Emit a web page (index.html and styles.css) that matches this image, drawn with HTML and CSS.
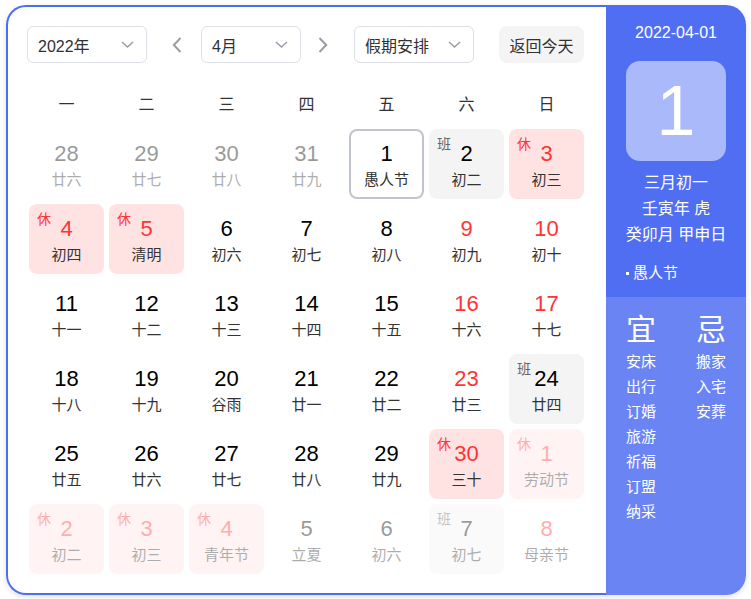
FILE: index.html
```html
<html>
<head>
    <meta name="viewport" content="width=device-width, initial-scale=1.0">
    <title>万年历</title>
    <link rel="stylesheet" href="styles.css">
</head>
<body>
<div class="calendar">
    <div class="main">
        <div class="toolbar">
            <div class="select select-year">
                <span>2022年</span>
                <svg class="chevron" width="13" height="7" viewBox="0 0 13 7"><path d="M1 1 L6.5 6 L12 1" /></svg>
            </div>
            <button class="arrow arrow-prev">
                <svg width="10" height="16" viewBox="0 0 10 16"><path d="M8.5 1 L1.8 8 L8.5 15" /></svg>
            </button>
            <div class="select select-month">
                <span>4月</span>
                <svg class="chevron" width="13" height="7" viewBox="0 0 13 7"><path d="M1 1 L6.5 6 L12 1" /></svg>
            </div>
            <button class="arrow arrow-next">
                <svg width="10" height="16" viewBox="0 0 10 16"><path d="M1.5 1 L8.2 8 L1.5 15" /></svg>
            </button>
            <div class="select select-holiday">
                <span>假期安排</span>
                <svg class="chevron" width="13" height="7" viewBox="0 0 13 7"><path d="M1 1 L6.5 6 L12 1" /></svg>
            </div>
            <button class="today-btn">返回今天</button>
        </div>
        <div class="weekdays">
            <span>一</span><span>二</span><span>三</span><span>四</span><span>五</span><span>六</span><span>日</span>
        </div>
        <div class="days" id="days"></div>
    </div>
    <div class="side">
        <div class="side-top">
            <div class="side-date">2022-04-01</div>
            <div class="side-day">1</div>
            <div class="side-lunar">
                <div>三月初一</div>
                <div>壬寅年 虎</div>
                <div>癸卯月 甲申日</div>
            </div>
            <div class="side-festival"><i></i>愚人节</div>
        </div>
        <div class="side-bottom">
            <div class="almanac">
                <div class="almanac-title">宜</div>
                <div>安床</div>
                <div>出行</div>
                <div>订婚</div>
                <div>旅游</div>
                <div>祈福</div>
                <div>订盟</div>
                <div>纳采</div>
            </div>
            <div class="almanac">
                <div class="almanac-title">忌</div>
                <div>搬家</div>
                <div>入宅</div>
                <div>安葬</div>
            </div>
        </div>
    </div>
</div>
<script>
    // day, lunar text, flags: o = other month, r = rest (休), w = work (班), e = weekend, t = today
    const days = [
        [28, '廿六', 'o'], [29, '廿七', 'o'], [30, '廿八', 'o'], [31, '廿九', 'o'], [1, '愚人节', 't'], [2, '初二', 'w'], [3, '初三', 'r'],
        [4, '初四', 'r'], [5, '清明', 'r'], [6, '初六', ''], [7, '初七', ''], [8, '初八', ''], [9, '初九', 'e'], [10, '初十', 'e'],
        [11, '十一', ''], [12, '十二', ''], [13, '十三', ''], [14, '十四', ''], [15, '十五', ''], [16, '十六', 'e'], [17, '十七', 'e'],
        [18, '十八', ''], [19, '十九', ''], [20, '谷雨', ''], [21, '廿一', ''], [22, '廿二', ''], [23, '廿三', 'e'], [24, '廿四', 'w'],
        [25, '廿五', ''], [26, '廿六', ''], [27, '廿七', ''], [28, '廿八', ''], [29, '廿九', ''], [30, '三十', 'r'], [1, '劳动节', 'or'],
        [2, '初二', 'or'], [3, '初三', 'or'], [4, '青年节', 'or'], [5, '立夏', 'o'], [6, '初六', 'o'], [7, '初七', 'ow'], [8, '母亲节', 'oe']
    ];
    const box = document.getElementById('days');
    days.forEach(function (d) {
        const flags = d[2];
        const cell = document.createElement('div');
        cell.className = 'cell';
        if (flags.indexOf('o') > -1) cell.classList.add('other');
        if (flags.indexOf('r') > -1) cell.classList.add('rest');
        if (flags.indexOf('w') > -1) cell.classList.add('work');
        if (flags.indexOf('e') > -1) cell.classList.add('weekend');
        if (flags.indexOf('t') > -1) cell.classList.add('today');
        let tag = '';
        if (flags.indexOf('r') > -1) tag = '<span class="tag">休</span>';
        if (flags.indexOf('w') > -1) tag = '<span class="tag">班</span>';
        cell.innerHTML = tag + '<div class="num">' + d[0] + '</div><div class="lunar">' + d[1] + '</div>';
        box.appendChild(cell);
    });
</script>
</body>
</html>
```

FILE: styles.css
```css
/* Page */
body {
    margin: 0;
    background: #fff;
    font-family: "Liberation Sans", "Noto Sans CJK SC", sans-serif;
    color: #303133;
}
/* Outer calendar frame */
.calendar {
    display: flex;
    width: 740px;
    height: 590px;
    margin: 5px 0 0 6px;
    border-radius: 20px;
    box-shadow: 0 2px 6px rgba(0, 0, 0, 0.12);
}
.main {
    width: 600px;
    box-sizing: border-box;
    border: 2px solid #4e6ef2;
    border-right: none;
    border-radius: 20px 0 0 20px;
    padding: 19px 0 0 19px;
    background: #fff;
}
/* Toolbar */
.toolbar {
    display: flex;
    align-items: center;
    height: 37px;
}
.select {
    display: flex;
    align-items: center;
    justify-content: space-between;
    box-sizing: border-box;
    height: 37px;
    padding: 0 12px 0 10px;
    border: 1px solid #dcdfe6;
    border-radius: 6px;
    font-size: 16px;
    color: #303133;
}
.select-year {
    width: 120px;
}
.select-month {
    width: 100px;
}
.select-holiday {
    width: 120px;
}
.chevron path {
    fill: none;
    stroke: #9a9da5;
    stroke-width: 1.5;
}
.arrow {
    display: flex;
    padding: 0;
    border: none;
    background: none;
}
.arrow path {
    fill: none;
    stroke: #9a9da5;
    stroke-width: 2;
}
.arrow-prev {
    margin: 0 19px 0 25px;
}
.arrow-next {
    margin: 0 26px 0 17px;
}
.today-btn {
    width: 85px;
    height: 37px;
    margin-left: 25px;
    padding: 0;
    border: none;
    border-radius: 8px;
    background: #f4f4f5;
    font-family: inherit;
    font-size: 16px;
    color: #303133;
}
/* Week header */
.weekdays {
    display: grid;
    grid-template-columns: repeat(7, 75px);
    column-gap: 5px;
    height: 40px;
    margin: 22px 0 4px 2px;
    line-height: 40px;
    text-align: center;
    font-size: 16px;
    color: #333;
}
/* Day grid */
.days {
    display: grid;
    grid-template-columns: repeat(7, 75px);
    grid-auto-rows: 70px;
    gap: 5px;
    margin-left: 2px;
}
.cell {
    position: relative;
    box-sizing: border-box;
    padding-top: 11px;
    border-radius: 8px;
    text-align: center;
}
.num {
    height: 28px;
    line-height: 28px;
    font-size: 22px;
    color: #000;
}
.lunar {
    margin-top: 2px;
    line-height: 20px;
    font-size: 15px;
    color: #333;
}
.tag {
    position: absolute;
    left: 8px;
    top: 6px;
    line-height: 18px;
    font-size: 14px;
    color: #666;
}
.weekend .num {
    color: #f33;
}
.rest {
    background: #ffe3e3;
}
.rest .num,
.rest .tag {
    color: #f33;
}
.work {
    background: #f4f4f4;
}
.work .num {
    color: #000;
}
.today {
    border: 2px solid #c0c4cc;
    padding-top: 9px;
}
.other {
    opacity: 0.4;
}
/* Side panel */
.side {
    display: flex;
    flex-direction: column;
    width: 140px;
    border-radius: 0 20px 20px 0;
    overflow: hidden;
    color: #fff;
}
.side-top {
    height: 292px;
    box-sizing: border-box;
    padding-top: 17px;
    background: #4f6ef2;
    text-align: center;
}
.side-date {
    line-height: 22px;
    font-size: 16px;
}
.side-day {
    width: 100px;
    height: 100px;
    margin: 17px auto 0;
    border-radius: 14px;
    background: #a9b9fa;
    line-height: 100px;
    font-size: 70px;
}
.side-lunar {
    margin-top: 9px;
    line-height: 26px;
    font-size: 16px;
}
.side-festival {
    display: flex;
    align-items: center;
    margin-top: 15px;
    padding-left: 20px;
    font-size: 15px;
    line-height: 20px;
}
.side-festival i {
    width: 3px;
    height: 3px;
    margin-right: 4px;
    background: #fff;
}
.side-bottom {
    flex: 1;
    display: flex;
    gap: 40px;
    padding: 14px 0 0 20px;
    background: #6a84f3;
    line-height: 25px;
    font-size: 15px;
}
.almanac-title {
    line-height: 38px;
    font-size: 30px;
    text-align: center;
}
```
